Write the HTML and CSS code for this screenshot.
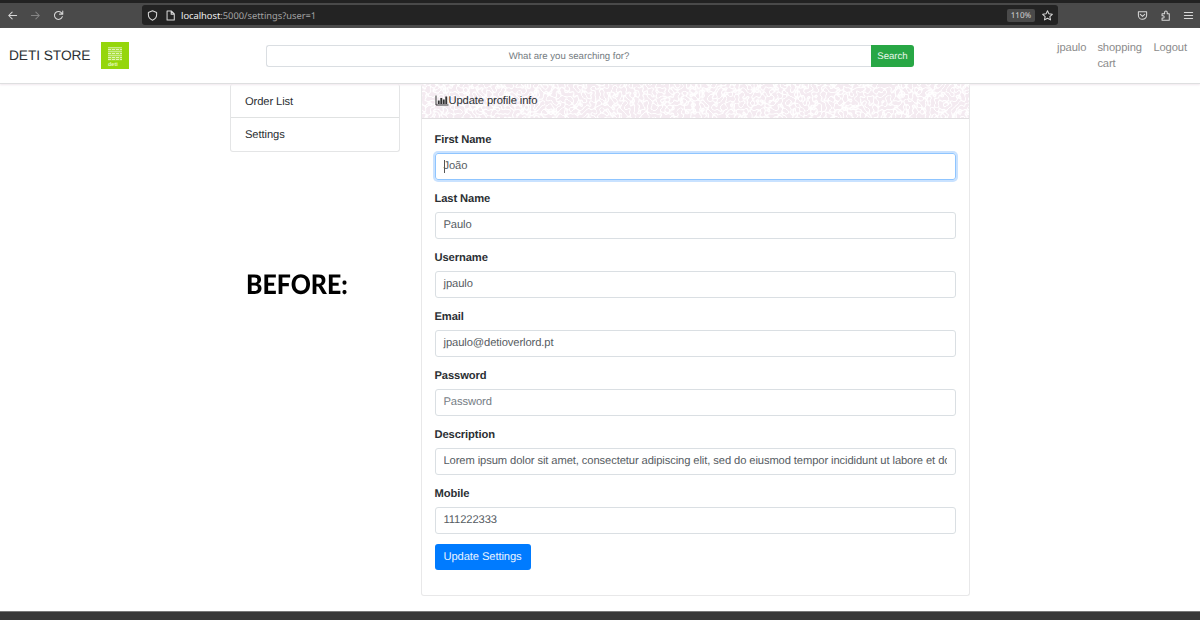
FILE: index.html
```html
<!DOCTYPE html>
<html lang="en">
<head>
<meta charset="utf-8">
<title>DETI STORE - Settings</title>
<link rel="stylesheet" href="styles.css">
</head>
<body>
<div class="tabs"></div>
<header class="toolbar">
  <div class="history">
    <svg class="ico" viewBox="0 0 16 16"><path d="M14 8H2.5M7.5 3L2.5 8l5 5"/></svg>
    <svg class="ico dim" viewBox="0 0 16 16"><path d="M2 8h11.500M8.500 3l5 5-5 5"/></svg>
    <svg class="ico" viewBox="0 0 16 16"><path d="M13.500 9.500A5.800 5.800 0 1 1 12 3.800L14 5.800M14.200 1.300v4.700H9.500"/></svg>
  </div>
  <div class="address">
    <svg class="ico" viewBox="0 0 16 16"><path d="M8 1.200L14 3.500v3.500c0 3.800-2.500 6.500-6 7.800C4.500 13.500 2 10.800 2 7V3.500z"/></svg>
    <svg class="ico page" viewBox="0 0 16 16"><path d="M3 1.500h6.500L13.500 5.500v9H3zM9 1.500V6h4.500"/></svg>
    <span class="url"><b>localhost</b>:5000/settings?user=1</span>
    <span class="zoom">110%</span>
    <svg class="ico star" viewBox="0 0 16 16"><path d="M8 1.200l2.100 4.400 4.900.6-3.600 3.300 1 4.900L8 12l-4.400 2.400 1-4.900L1 6.200l4.900-.6z"/></svg>
  </div>
  <div class="tools">
    <svg class="ico" viewBox="0 0 16 16"><path d="M2 2.500h12v5a6 6 0 0 1-12 0zM4.800 6.300L8 9.300l3.200-3"/></svg>
    <svg class="ico" viewBox="0 0 16 16"><path d="M3 14.800h10.500V5.500h-3V3.200a1.900 1.900 0 0 0-3.800 0V5.500H3v3h1.500a1.600 1.600 0 0 1 0 3.200H3z"/></svg>
    <svg class="ico" viewBox="0 0 16 16"><path d="M2 3.500h12M2 8h12M2 12.500h12"/></svg>
  </div>
</header>
<nav class="navbar">
  <span class="brand">DETI STORE</span>
  <svg class="logo" viewBox="0 0 28 27"><rect width="28" height="27" fill="#95d60b"/><path d="M7 6h14v12.500H7z" fill="#acdf42"/><path d="M7 5.500h14M7 9.500h14M7 13.500h14" stroke="#c9ec86" fill="none"/><path d="M7 7.500h14M7 11.500h14M7 15.500h14M7 17.500h14" stroke="#e0f5b5" stroke-dasharray="3 1" fill="none"/><text x="7" y="23.500" font-size="5.500" font-weight="bold" fill="#e5f8bd">deti</text></svg>
  <div class="search"><span class="query">What are you searching for?</span><span class="go">Search</span></div>
  <div class="links"><span>jpaulo</span><span class="cart">shopping cart</span><span>Logout</span></div>
</nav>
<main class="content">
  <aside class="side">
    <div class="menu"><div class="item">Order List</div><div class="item">Settings</div></div>
    <div class="before">BEFORE:</div>
  </aside>
  <section class="card">
    <div class="card-head">
      <svg class="texture" width="548" height="34" aria-hidden="true">
        <filter id="grain" x="0" y="0" width="100%" height="100%" color-interpolation-filters="sRGB">
          <feTurbulence type="turbulence" baseFrequency="0.23" numOctaves="1" seed="5"/>
          <feColorMatrix values="0 0 0 0 1  0 0 0 0 1  0 0 0 0 1  0 0 0 -6 1.200"/>
        </filter>
        <rect width="548" height="34" fill="#f4ebf1"/>
        <rect width="548" height="34" filter="url(#grain)"/>
      </svg>
      <svg class="chart" viewBox="0 0 14 11"><path d="M1 .5v9.500h12.500" fill="none" stroke="#333"/><path d="M2.800 5.500h1.900V9H2.800zM5.300 3h1.900v6H5.300zM7.800 4.500h1.900V9H7.800zM10.300 1.500h1.900V9h-1.900z" fill="#333"/></svg>
      <span class="title">Update profile info</span>
    </div>
    <div class="form">
      <div class="group"><div class="label">First Name</div><div class="input focus"><i class="caret"></i>João</div></div>
      <div class="group"><div class="label">Last Name</div><div class="input">Paulo</div></div>
      <div class="group"><div class="label">Username</div><div class="input">jpaulo</div></div>
      <div class="group"><div class="label">Email</div><div class="input">jpaulo@detioverlord.pt</div></div>
      <div class="group"><div class="label">Password</div><div class="input hint">Password</div></div>
      <div class="group"><div class="label">Description</div><div class="input"><span class="clip">Lorem ipsum dolor sit amet, consectetur adipiscing elit, sed do eiusmod tempor incididunt ut labore et do</span></div></div>
      <div class="group"><div class="label">Mobile</div><div class="input">111222333</div></div>
      <div class="button">Update Settings</div>
    </div>
  </section>
</main>
<footer class="bottom"></footer>
</body>
</html>
```
FILE: styles.css
```css
* { box-sizing: border-box; }
body { margin: 0; width: 1200px; height: 620px; overflow: hidden; display: flex; flex-direction: column; background: #fff; color: #2b2f33; font: 11.2px/16.5px "Liberation Sans", Arial, sans-serif; letter-spacing: -.1px; text-rendering: geometricPrecision; }
.tabs { height: 3px; flex: none; background: #222; }
.toolbar { height: 25px; flex: none; display: flex; align-items: center; background: #4a4a4a; border-bottom: 1px solid #414141; letter-spacing: 0; }
.ico { width: 11px; height: 11px; flex: none; fill: none; stroke: #d8d8d8; stroke-width: 1.5; stroke-linejoin: round; stroke-linecap: round; }
.dim { stroke: #858585; }
.history { width: 142px; display: flex; gap: 12px; padding-left: 7px; }
.address { width: 916px; height: 20px; display: flex; align-items: center; background: #232323; border-radius: 3px; padding-left: 5px; }
.page { margin-left: 7px; }
.url { margin: 1px 0 0 5px; font: 9.3px/16px "Noto Sans", sans-serif; color: #a3a3a3; }
.url b { font-weight: 400; color: #f2f2f2; }
.zoom { margin-left: auto; width: 28px; height: 13px; border-radius: 2px; background: #4a4a4a; color: #d8d8d8; font: 8px/13px "Noto Sans", sans-serif; text-align: center; }
.star { margin: 0 5px 0 7px; }
.tools { margin-left: auto; display: flex; gap: 12px; padding-right: 6px; }
.navbar { height: 56px; flex: none; display: flex; align-items: center; padding-left: 9px; border-bottom: 1px solid #dedfe0; box-shadow: 0 1px 2px #f0e8ee; position: relative; }
.brand { width: 92px; padding-top: 1px; font-size: 13.75px; line-height: 18px; letter-spacing: -.08px; white-space: nowrap; }
.logo { width: 28px; height: 27px; flex: none; letter-spacing: 0; }
.search { display: flex; width: 648px; height: 22px; margin-left: 137px; font-size: 9.625px; line-height: 21px; letter-spacing: 0; }
.query { flex: 1; border: 1px solid #dadee2; border-right: 0; border-radius: 3px 0 0 3px; text-align: center; color: #747b81; }
.go { width: 43px; line-height: 23px; text-align: center; color: #e7f6ea; background: #28a745; border-radius: 0 3px 3px 0; }
.links { display: flex; gap: 11px; margin-left: auto; padding: 1px 13px 0 0; color: #8c8c8c; line-height: 16px; }
.cart { width: 45px; }
.content { flex: 1; display: flex; align-items: flex-start; padding-left: 230px; }
.side { width: 170px; margin-right: 20.500px; }
.menu { border: 1px solid #e4e5e6; border-top: 0; border-radius: 3px; }
.item { height: 33px; padding: 9.500px 14px 0; }
.item + .item { height: 34px; border-top: 1px solid #e0e2e2; padding-top: 8.500px; }
.before { margin: 114px 0 0 16px; color: #000; font: 900 27px/36px Lato, sans-serif; letter-spacing: 0; transform: scaleX(.92); transform-origin: 0 50%; }
.card { width: 549.500px; height: 512px; border: 1px solid #e8e8e9; border-top: 0; border-radius: 3px; }
.card-head { height: 34.500px; position: relative; border-bottom: 1px solid #e1dfe1; display: flex; align-items: center; padding-left: 13px; }
.texture { position: absolute; left: 0; top: 0; width: 100%; height: 34px; }
.chart { width: 14px; height: 11px; position: relative; }
.title { position: relative; padding-top: 1px; }
.form { padding: 13.500px 13px 0; }
.group { height: 59px; }
.label { height: 20.500px; font-weight: 700; line-height: 17px; }
.input { height: 27px; display: flex; align-items: center; border: 1px solid #dadfe3; border-radius: 3px; padding: 1px 8px 0; color: #565c62; position: relative; }
.focus { border-color: #8fc5ff; box-shadow: 0 0 0 2px #c9e2ff; }
.hint { color: #757d84; }
.caret { position: absolute; left: 8px; top: 6px; width: 1px; height: 13px; background: #555; }
.clip { overflow: hidden; white-space: nowrap; }
.button { width: 96px; height: 26px; margin-top: -1px; border-radius: 3px; background: #007bff; color: #e8f3ff; line-height: 26px; text-align: center; }
.bottom { height: 9px; flex: none; background: #383838; border-top: 1px solid #777; }
```
